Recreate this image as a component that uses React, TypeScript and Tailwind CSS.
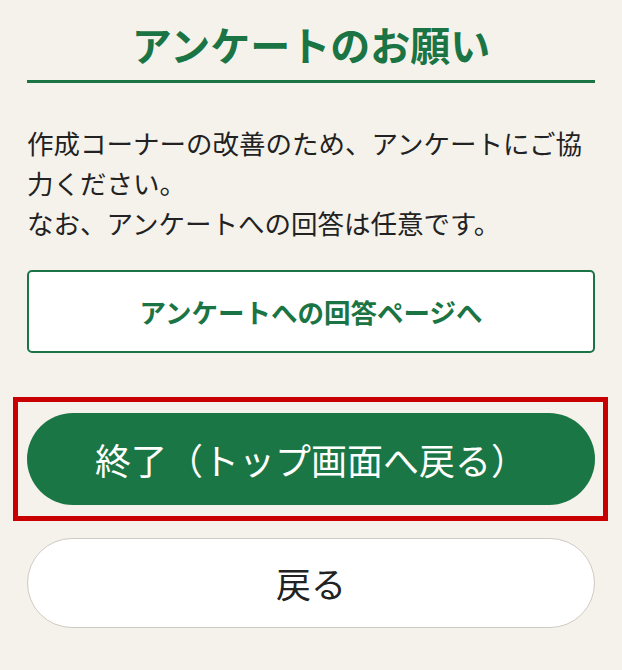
import React from "react";

export default function App() {
  const font = {
    fontFamily: '"Noto Sans CJK JP", "Noto Sans", sans-serif',
  };
  return (
    <div
      className="min-h-[670px] w-full bg-[#f5f2ec] px-[27px] pt-[14px] pb-[40px]"
      style={font}
    >
      <h1 className="border-b-[3px] border-[#1a7444] pb-[6px] text-center text-[40px] font-bold leading-[60px] text-[#1a7444]">
        アンケートのお願い
      </h1>
      <p className="mt-[40px] text-[26.5px] leading-[39.75px] text-[#222222]">
        作成コーナーの改善のため、アンケートにご協力ください。
        <br />
        なお、アンケートへの回答は任意です。
      </p>
      <button className="mt-[28px] flex h-[83px] w-full items-center justify-center rounded-[5px] border-2 border-[#1a7444] bg-white text-[26.5px] font-bold text-[#1a7444]">
        アンケートへの回答ページへ
      </button>
      <div className="mt-[44px] ml-[-14px] mr-[-13px] border-[5px] border-[#c80000] py-[11px] pl-[9px] pr-[8px]">
        <button className="flex h-[92px] w-full items-center justify-center rounded-full bg-[#1b7645] text-[36px] text-white">
          終了（トップ画面へ戻る）
        </button>
      </div>
      <button className="mt-[17px] flex h-[90px] w-full items-center justify-center rounded-full border border-[#cfcac2] bg-white text-[35px] text-[#222222]">
        戻る
      </button>
    </div>
  );
}
